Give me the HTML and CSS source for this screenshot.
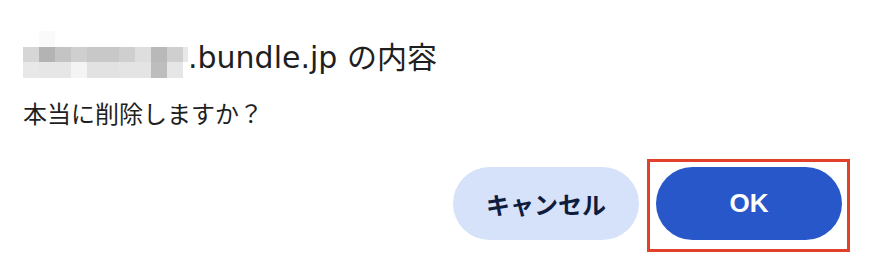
FILE: index.html
```html
<!DOCTYPE html>
<html lang="ja">
<head>
  <meta charset="UTF-8" />
  <meta name="viewport" content="width=device-width, initial-scale=1" />
  <title>確認ダイアログ</title>
  <link rel="stylesheet" href="styles.css">
</head>
<body>

  <!-- Confirm dialog -->
  <div class="dialog">
    <div class="dialog-title">
      <div class="mosaic">
        <span></span><span class="m1"></span><span></span><span></span><span></span><span></span><span></span><span></span><span></span><span></span><span class="half"></span>
        <span class="m2"></span><span class="m3"></span><span class="m4"></span><span class="m5"></span><span class="m6"></span><span class="m6"></span><span class="m5"></span><span class="m7"></span><span class="m8"></span><span class="m5"></span><span class="half m9"></span>
        <span class="m9"></span><span class="m10"></span><span class="m10"></span><span class="m11"></span><span class="m12"></span><span class="m12"></span><span class="m13"></span><span class="m13"></span><span class="m14"></span><span class="m10"></span><span class="half"></span>
      </div>
      <h1><span class="latin">.bundle.jp</span> の内容</h1>
    </div>

    <p class="dialog-message">本当に削除しますか？</p>

    <div class="dialog-actions">
      <button class="btn btn-cancel">キャンセル</button>
      <span class="highlight">
        <button class="btn btn-ok">OK</button>
      </span>
    </div>
  </div>

</body>
</html>
```

FILE: styles.css
```css
* {
  margin: 0;
  padding: 0;
  box-sizing: border-box;
}

body {
  background: #fff;
  color: #1f1f1f;
  font-family: "Noto Sans CJK JP", sans-serif;
  width: 870px;
  height: 264px;
  overflow: hidden;
}

.dialog {
  padding: 31px 20px 0 23px;
}

.dialog-title {
  display: flex;
  align-items: center;
}

/* blurred domain name */
.mosaic {
  display: grid;
  grid-template-columns: repeat(10, 16px) 5px;
  grid-template-rows: 16px 15px 16px;
}

.mosaic span { background: #fff; }
.mosaic .m1 { background: #fafafa; }
.mosaic .m2 { background: #d6d6d6; }
.mosaic .m3 { background: #b3b3b3; }
.mosaic .m4 { background: #c4c4c4; }
.mosaic .m5 { background: #cfcfcf; }
.mosaic .m6 { background: #c8c8c8; }
.mosaic .m7 { background: #dedede; }
.mosaic .m8 { background: #b9b9b9; }
.mosaic .m9 { background: #e8e8e8; }
.mosaic .m10 { background: #e6e6e6; }
.mosaic .m11 { background: #f4f4f4; }
.mosaic .m12 { background: #e2e2e2; }
.mosaic .m13 { background: #e4e4e4; }
.mosaic .m14 { background: #bdbdbd; }

.dialog-title h1 {
  font-size: 30px;
  font-weight: 400;
  line-height: 1;
  margin-top: 3px;
  font-family: "Noto Sans CJK JP", sans-serif;
}

.latin {
  font-family: "DejaVu Sans", "Noto Sans CJK JP", sans-serif;
  margin-right: 3px;
}

.dialog-message {
  font-size: 24px;
  line-height: 24px;
  margin-top: 23px;
}

.dialog-actions {
  display: flex;
  justify-content: flex-end;
  align-items: flex-start;
  gap: 8px;
  margin-top: 34px;
}

.btn {
  width: 186px;
  height: 73px;
  border: none;
  border-radius: 37px;
  font-weight: 700;
  cursor: pointer;
}

.btn-cancel {
  margin-top: 8px;
  background: #d6e2fa;
  color: #0f1c3e;
  font-family: "Noto Sans CJK JP", sans-serif;
  font-size: 24px;
}

.btn-ok {
  display: block;
  background: #2757c8;
  color: #fff;
  font-family: "Liberation Sans", Arial, sans-serif;
  font-size: 26px;
}

/* red annotation box around OK */
.highlight {
  display: block;
  border: 3px solid #e2402b;
  padding: 5px 5px 9px 6px;
}
```
